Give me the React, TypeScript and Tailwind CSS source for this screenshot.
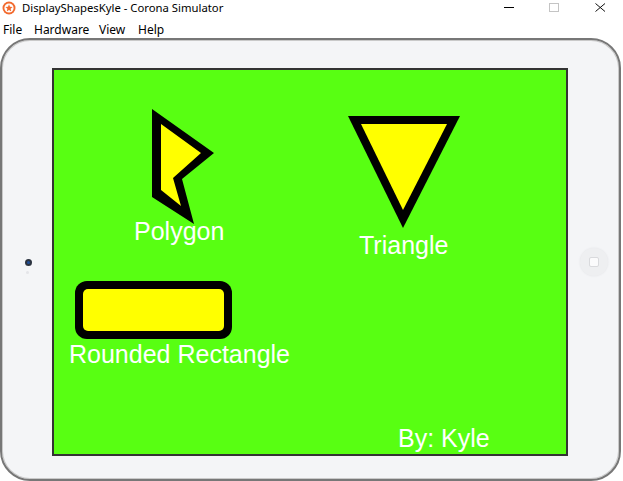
import React from 'react';

// Corona simulator window showing an iPad skin with a few shapes
const menuItems = [
  { label: 'File', w: 'w-[31px]' },
  { label: 'Hardware', w: 'w-[65px]' },
  { label: 'View', w: 'w-[39px]' },
  { label: 'Help', w: 'w-[40px]' },
];

function CoronaIcon() {
  return (
    <svg width="14" height="14" viewBox="0 0 14 14">
      <circle cx="7" cy="7" r="6.5" fill="#f26a2e" />
      <circle cx="7" cy="7" r="4.6" fill="#fff" />
      <polygon points="7,3.2 8,5.8 10.6,6 8.6,7.7 9.3,10.4 7,8.9 4.7,10.4 5.4,7.7 3.4,6 6,5.8" fill="#f26a2e" />
    </svg>
  );
}

function Shapes() {
  return (
    <svg width="512" height="384" viewBox="0 0 512 384" className="absolute left-0 top-0">
      {/* polygon */}
      <polygon points="98,39 160,83 128,109 140,154 98,127" fill="#000" />
      <polygon points="107,54 147,83 119,108 127,136 107,120" fill="#ffff00" />
      {/* triangle */}
      <polygon points="294,46 406,46 349,158" fill="#000" />
      <polygon points="307,54 393,54 349,140" fill="#ffff00" />
      {/* rounded rect */}
      <rect x="21" y="211" width="157" height="58" rx="12" fill="#000" />
      <rect x="29" y="219" width="141" height="42" rx="5" fill="#ffff00" />
    </svg>
  );
}

export default function App() {
  return (
    <div className="w-[623px] h-[481px] bg-white flex flex-col overflow-hidden">
      {/* title bar */}
      <div className="h-[20px] flex items-start relative" style={{ fontFamily: '"Noto Sans", sans-serif' }}>
        <div className="ml-[2px] mt-[1px]">
          <CoronaIcon />
        </div>
        <span className="ml-[6px] mt-[2px] text-[11.3px] text-black leading-[12px]">DisplayShapesKyle - Corona Simulator</span>
        <div className="ml-auto flex items-center h-[15px]">
          <div className="w-[10px] h-px bg-black mr-[35px]" />
          <div className="w-[10px] h-[9px] border border-[#c4c4c4] mr-[36px]" />
          <svg width="11" height="9" viewBox="0 0 11 9" className="mr-[17px]">
            <path d="M0.5 0.5 L10 8.5 M10 0.5 L0.5 8.5" stroke="#111" strokeWidth="1" />
          </svg>
        </div>
      </div>

      {/* menu bar */}
      <div className="h-[18px] flex items-start pt-[3px] pl-[3px] text-[12px] text-black" style={{ fontFamily: '"Noto Sans", sans-serif' }}>
        {menuItems.map((m) => (
          <span key={m.label} className={`${m.w} leading-[13px]`}>
            {m.label}
          </span>
        ))}
      </div>

      {/* device frame */}
      <div className="w-[621px] h-[443px] rounded-[30px] border-2 border-[#777] bg-[#f4f5f7] flex items-start pt-[28px] shadow-[inset_0_0_0_1px_#c9c9c9]">
        <div className="w-[50px] h-[388px] flex flex-col items-center justify-center relative">
          <div className="w-[7px] h-[7px] rounded-full bg-[#2c3440] flex items-center justify-center ml-[2px]">
            <div className="w-[3px] h-[3px] rounded-full bg-[#1f4f9a]" />
          </div>
          <div className="absolute left-[24px] top-[203px] w-[3px] h-[3px] rounded-full bg-[#e4e5e8]" />
        </div>

        <div className="w-[516px] h-[388px] border-2 border-[#333] bg-[#58ff12] relative overflow-hidden" style={{ fontFamily: '"Liberation Sans", Arial, sans-serif' }}>
          <Shapes />
          <span className="absolute left-[80px] top-[149px] text-[25px] leading-none text-white">Polygon</span>
          <span className="absolute left-[305px] top-[163px] text-[25px] leading-none text-white">Triangle</span>
          <span className="absolute left-[15px] top-[272px] text-[25px] leading-none text-white">Rounded Rectangle</span>
          <span className="absolute left-[344px] top-[356px] text-[25px] leading-none text-white">By: Kyle</span>
        </div>

        <div className="flex-1 h-[388px] flex items-center justify-center">
          <div className="w-[28px] h-[28px] rounded-full bg-[#eeeff1] shadow-[0_0_2px_#e2e3e6] flex items-center justify-center ml-[1px]">
            <div className="w-[10px] h-[10px] rounded-[2px] border border-[#d9dadd] bg-[#fbfbfc]" />
          </div>
        </div>
      </div>
    </div>
  );
}
